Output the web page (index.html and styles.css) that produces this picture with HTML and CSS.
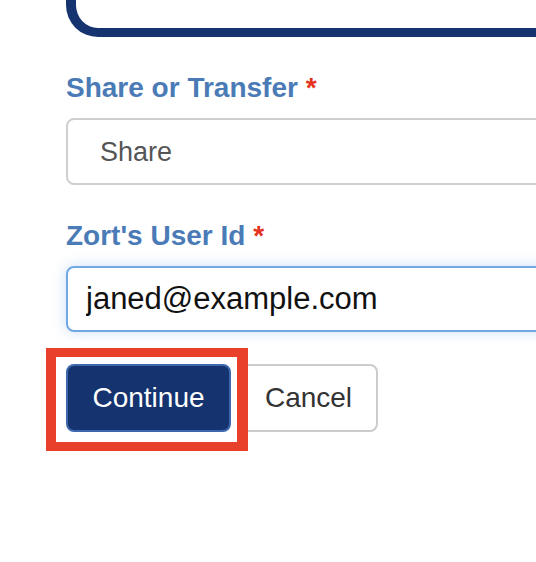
FILE: index.html
```html
<!DOCTYPE html>
<html lang="en">
<head>
<meta charset="utf-8">
<title>Share or Transfer</title>
<link rel="stylesheet" href="styles.css">
</head>
<body>
<div class="page">
  <div class="panel-end"></div>
  <form class="form">
    <div class="field">
      <label class="label" for="mode">Share or Transfer <span class="req">*</span></label>
      <select id="mode" class="control select">
        <option>Share</option>
        <option>Transfer</option>
      </select>
    </div>
    <div class="field">
      <label class="label" for="uid">Zort's User Id <span class="req">*</span></label>
      <input id="uid" class="control input focus" type="text" value="janed@example.com">
    </div>
    <div class="actions">
      <span class="primary-wrap">
        <button type="button" class="btn btn-primary">Continue</button>
        <span class="highlight"></span>
      </span>
      <button type="button" class="btn btn-default">Cancel</button>
    </div>
  </form>
</div>
</body>
</html>
```

FILE: styles.css
```css
html {
  overflow: hidden;
}
html, body {
  margin: 0;
  padding: 0;
  background: #fff;
}
body {
  font-family: "Liberation Sans", Arial, Helvetica, sans-serif;
}
.page {
  width: 640px;
  padding-left: 66px;
  padding-bottom: 40px;
}
.panel-end {
  height: 28px;
  border-left: 10px solid #15336e;
  border-bottom: 9px solid #15336e;
  border-bottom-left-radius: 32px;
}
.form {
  display: flex;
  flex-direction: column;
  padding-top: 35px;
}
.field {
  display: flex;
  flex-direction: column;
  gap: 15px;
  margin-bottom: 35px;
}
.field:nth-child(2) {
  margin-bottom: 32px;
}
.label {
  font-size: 28px;
  line-height: 31px;
  font-weight: bold;
  color: #4a7bb7;
}
.req {
  color: #e5321c;
}
.control {
  box-sizing: border-box;
  width: 100%;
  height: 67px;
  border-radius: 8px;
  font-family: "Liberation Sans", Arial, Helvetica, sans-serif;
  margin: 0;
  outline: none;
}
.select {
  appearance: none;
  -webkit-appearance: none;
  background: #fff;
  border: 2px solid #cfcfcf;
  padding: 0 0 0 32px;
  font-size: 27px;
  color: #555;
}
.input {
  height: 66px;
  border: 2px solid #6fa8e4;
  padding: 0 0 0 18px;
  font-size: 31px;
  color: #111;
  background: #fff;
}
.input.focus {
  box-shadow: 0 0 14px rgba(102, 160, 225, 0.35);
}
.actions {
  display: flex;
  align-items: center;
  gap: 8px;
}
.primary-wrap {
  position: relative;
  display: flex;
}
.btn {
  box-sizing: border-box;
  height: 68px;
  border-radius: 8px;
  font-family: "Liberation Sans", Arial, Helvetica, sans-serif;
  font-size: 28px;
  cursor: pointer;
  margin: 0;
}
.btn-primary {
  width: 165px;
  background: #15336e;
  border: 2px solid #3e68ad;
  color: #fff;
}
.btn-default {
  width: 139px;
  background: #fff;
  border: 2px solid #cccccc;
  color: #333;
}
.highlight {
  position: absolute;
  left: -20px;
  top: -16px;
  width: 202px;
  height: 103px;
  box-sizing: border-box;
  border: 9px solid #e8402a;
  border-left-width: 10px;
  border-right-width: 11px;
  pointer-events: none;
}
```
